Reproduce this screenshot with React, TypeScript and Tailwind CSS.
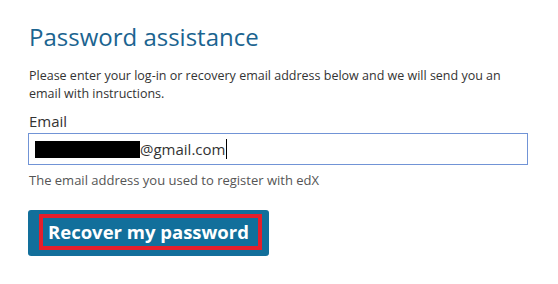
export default function App() {
  return (
    <div className="w-[558px] h-[284px] bg-white pl-[28px] pt-[22px] font-['Open_Sans',sans-serif]">
      <h1 className="text-[24px] leading-[30px] text-[#1b6490] pl-px">Password assistance</h1>
      <p className="mt-[15px] text-[12.5px] leading-[18px] text-[#333] pl-px w-[500px]">
        Please enter your log-in or recovery email address below and we will send you an email with instructions.
      </p>
      <div className="mt-[8px]">
        <label className="block text-[15px] leading-[20px] text-[#333] pl-px">Email</label>
        <div className="mt-[2px] w-[500px] h-[32px] border border-[#7194d6] flex items-center pl-[6px]">
          <span className="inline-block w-[105px] h-[17px] bg-black"></span>
          <span className="text-[15px] text-[#333] leading-[20px]">@gmail.com</span>
          <span className="inline-block w-px h-[20px] bg-black ml-px"></span>
        </div>
        <p className="mt-[6px] text-[13px] leading-[18px] text-[#555] pl-px">The email address you used to register with edX</p>
      </div>
      <button className="mt-[21px] w-[241px] h-[46px] bg-[#126f9b] rounded-[3px] flex items-start pt-[4px] pl-[11px]">
        <span className="border-[4px] border-[#e61f2b] pl-[5px] pr-[9px] h-[36px] flex items-center text-[18.5px] font-bold text-white leading-none">
          Recover my password
        </span>
      </button>
    </div>
  );
}
